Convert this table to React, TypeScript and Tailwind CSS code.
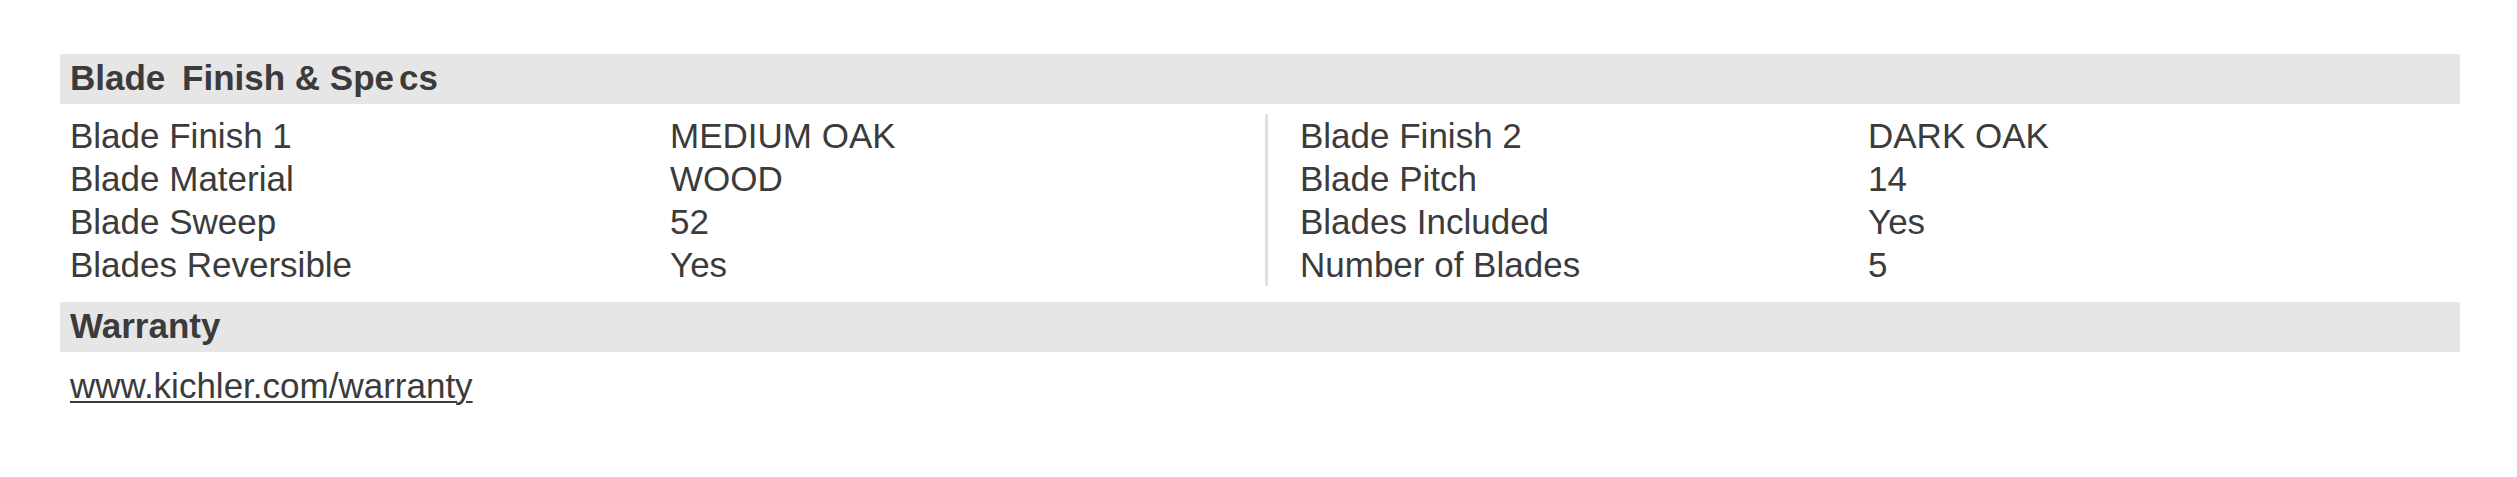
import React from "react";

const left: [string, string][] = [
  ["Blade Finish 1", "MEDIUM OAK"],
  ["Blade Material", "WOOD"],
  ["Blade Sweep", "52"],
  ["Blades Reversible", "Yes"],
];

const right: [string, string][] = [
  ["Blade Finish 2", "DARK OAK"],
  ["Blade Pitch", "14"],
  ["Blades Included", "Yes"],
  ["Number of Blades", "5"],
];

export default function App() {
  return (
    <div
      className="min-h-[477px] w-[2517px] bg-white pt-[54px] pl-[60px] text-[#3b3b3b]"
      style={{ fontFamily: '"Liberation Sans", Arial, sans-serif' }}
    >
      <div className="w-[2400px]">
        <div className="h-[50px] bg-[#e6e6e6] pl-[10px] text-[35px] font-bold leading-[48px]">
          <span>Blade</span>
          <span className="ml-[7px]"> Finish &amp; Spe</span>
          <span className="ml-[5px]">cs</span>
        </div>

        <div className="mt-[10px] flex text-[35px] leading-[43px]">
          <div className="grid w-[1205px] grid-cols-[600px_1fr] pl-[10px]">
            {left.map(([k, v]) => (
              <React.Fragment key={k}>
                <div>{k}</div>
                <div>{v}</div>
              </React.Fragment>
            ))}
          </div>
          <div className="grid flex-1 grid-cols-[568px_1fr] border-l-[3px] border-[#e0e0e0] pl-[32px]">
            {right.map(([k, v]) => (
              <React.Fragment key={k}>
                <div>{k}</div>
                <div>{v}</div>
              </React.Fragment>
            ))}
          </div>
        </div>

        <div className="mt-[16px] h-[50px] bg-[#e6e6e6] pl-[10px] text-[35px] font-bold leading-[48px]">
          Warranty
        </div>

        <div className="mt-[12px] pl-[10px] text-[35px] leading-[43px]">
          <a
            href="#"
            className="text-[#3b3b3b] underline decoration-[2px] underline-offset-[3px]"
          >
            www.kichler.com/warranty
          </a>
        </div>
      </div>
    </div>
  );
}
